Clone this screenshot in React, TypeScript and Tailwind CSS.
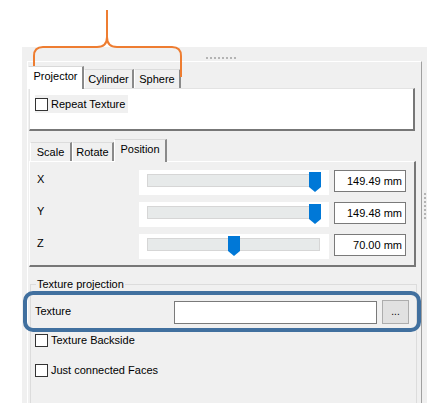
import React from "react";

function Tab({ label, w, selected, bg }: { label: string; w: number; selected?: boolean; bg?: string }) {
  if (selected) {
    return (
      <div
        className={`relative z-10 -mb-[1px] flex h-[23px] items-start justify-center border-l border-t border-l-white border-t-[#d9d9d9] border-r-2 border-r-[#8a8a8a] pt-[3px] ${bg === "white" ? "bg-white" : "bg-[#f0f0f0]"}`}
        style={{ width: w }}
      >
        {label}
      </div>
    );
  }
  return (
    <div
      className="flex h-[19px] items-start justify-center border-l border-t border-l-white border-t-[#dcdcdc] border-r-2 border-r-[#8a8a8a] bg-[#f0f0f0] pt-[3px]"
      style={{ width: w }}
    >
      {label}
    </div>
  );
}

function Checkbox() {
  return <div className="h-[13px] w-[13px] shrink-0 border border-[#333] bg-white" />;
}

function SliderRow({ label, pos, value }: { label: string; pos: number; value: string }) {
  return (
    <div className="flex items-start">
      <div className="w-[102px] pt-[3px]">{label}</div>
      <div className="h-[25px] w-[190px] bg-white pl-[8px] pt-[4px]">
        <div className="relative h-[13px] w-[173px] border border-[#d6d6d6] bg-[#e7eaea]">
          <svg
            className="absolute top-[-3px]"
            style={{ left: pos }}
            width="12"
            height="20"
            viewBox="0 0 12 20"
          >
            <path d="M0 0 H12 V15 L6 20 L0 15 Z" fill="#0078d7" />
          </svg>
        </div>
      </div>
      <div className="ml-[5px] flex h-[22px] w-[72px] items-center justify-end border border-[#7a7a7a] bg-white pr-[3px]">
        {value}
      </div>
    </div>
  );
}

export default function App() {
  return (
    <div className="relative h-[417px] w-[431px] overflow-hidden bg-white font-['Liberation_Sans',Arial,sans-serif] text-[11px] leading-[13px] text-black">
      <div className="h-[47px]" />
      <div className="ml-[22px] flex h-[356px] w-[405px] flex-col bg-[#f0f0f0]">
        {/* grip */}
        <div className="flex h-[14px] gap-[2px] pl-[184px] pt-[10px]">
          {Array.from({ length: 8 }).map((_, i) => (
            <div key={i} className="h-[2px] w-[2px] bg-[#b4b4b4]" />
          ))}
        </div>
        <div className="flex flex-1">
          {/* frame */}
          <div className="ml-[5px] flex w-[395px] flex-col border-l border-t border-r border-l-white border-t-white border-r-[#a0a0a0]">
            {/* tab group 1 */}
            <div className="flex h-[26px] items-end pt-[4px]">
              <Tab label="Projector" w={56} selected bg="white" />
              <Tab label="Cylinder" w={50} />
              <Tab label="Sphere" w={47} />
            </div>
            <div className="ml-[1px] h-[43px] w-[386px] border-l border-t border-[#e3e3e3] border-r-2 border-b-2 border-r-[#777] border-b-[#777] bg-white pl-[5px] pt-[6px]">
              <div className="flex h-[18px] w-[93px] items-center gap-[3px] bg-[#f0f0f0]">
                <Checkbox />
                <span>Repeat Texture</span>
              </div>
            </div>
            {/* tab group 2 */}
            <div className="mt-[9px] flex h-[21px] items-end pl-[2px]">
              <Tab label="Scale" w={42} />
              <Tab label="Rotate" w={42} />
              <Tab label="Position" w={53} selected />
            </div>
            <div className="ml-[1px] flex h-[106px] w-[387px] flex-col gap-[7px] border-l border-t border-white border-r-2 border-b-2 border-r-[#777] border-b-[#777] bg-[#f0f0f0] pl-[7px] pt-[8px]">
              <SliderRow label="X" pos={161} value="149.49 mm" />
              <SliderRow label="Y" pos={161} value="149.48 mm" />
              <SliderRow label="Z" pos={80} value="70.00 mm" />
            </div>
            {/* group box */}
            <fieldset className="ml-[2px] mt-[11px] flex-1 w-[387px] border border-b-0 border-[#dcdcdc] pl-[4px]">
              <legend className="ml-[1px] px-[1px]">Texture projection</legend>
              <div className="mt-[9px] flex items-center">
                <div className="w-[139px] pb-[2px]">Texture</div>
                <div className="h-[23px] w-[203px] border border-[#7a7a7a] bg-white" />
                <div className="ml-[5px] flex h-[24px] w-[27px] items-center justify-center border border-[#adadad] bg-[#e1e1e1] pb-[2px] text-[10px]">
                  ...
                </div>
              </div>
              <div className="mt-[10px] flex items-center gap-[3px]">
                <Checkbox />
                <span>Texture Backside</span>
              </div>
              <div className="mt-[17px] flex items-center gap-[3px]">
                <Checkbox />
                <span>Just connected Faces</span>
              </div>
            </fieldset>
          </div>
          {/* right grip */}
          <div className="flex flex-col gap-[2px] pl-[2px] pt-[132px]">
            {Array.from({ length: 7 }).map((_, i) => (
              <div key={i} className="h-[2px] w-[2px] bg-[#b4b4b4]" />
            ))}
          </div>
        </div>
      </div>
      <div className="h-[14px]" />

      {/* blue highlight annotation */}
      <div className="absolute left-[23px] top-[291px] h-[41px] w-[398px] rounded-[10px] border-4 border-[#41709f]" />

      {/* orange bracket annotation */}
      <svg className="absolute left-0 top-0" width="431" height="90" viewBox="0 0 431 90">
        <path
          d="M107 10 V37 Q107 47 97 47 H43 Q34 47 34 56 V78 M107 37 Q107 47 117 47 H172 Q181 47 181 56 V77"
          fill="none"
          stroke="#ee7d31"
          strokeWidth="2"
        />
      </svg>
    </div>
  );
}
